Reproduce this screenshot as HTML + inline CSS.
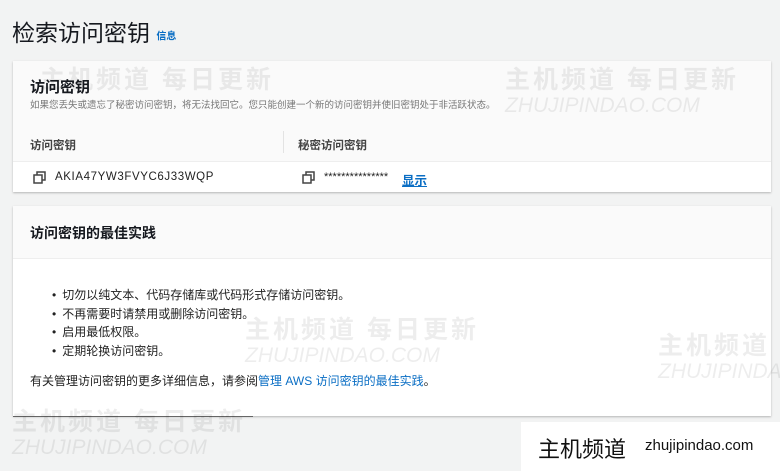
<!DOCTYPE html>
<html><head><meta charset="utf-8"><style>
*{margin:0;padding:0;box-sizing:border-box}
body{width:780px;height:471px;background:#f2f3f3;font-family:"Liberation Sans","Noto Sans CJK SC",sans-serif;color:#16191f;position:relative;overflow:hidden}
.abs{position:absolute}
.card{position:absolute;left:13px;width:758px;background:#fff;box-shadow:0 1px 2px rgba(0,0,0,.25)}
.wm{position:absolute;color:rgba(0,0,0,.07);font-weight:bold;font-size:25px;letter-spacing:3px;white-space:nowrap}
.wm2{position:absolute;color:rgba(0,0,0,.07);font-style:italic;font-size:21px;white-space:nowrap}
ul{list-style:none}
li{font-size:12px;color:#222;height:18.5px}
li:before{content:"•";margin-right:6px}
a{color:#0a6ec4}
</style></head><body>
<div class="abs" style="left:12px;top:14px;font-size:23px;color:#16191f">检索访问密钥 <span style="font-size:10px;color:#0a6ec4;font-weight:bold;vertical-align:middle">信息</span></div>

<div class="card" style="top:61px;height:131px;background:#fafafa">
  <div class="abs" style="left:17px;top:15px;font-size:15px;font-weight:bold">访问密钥</div>
  <div class="abs" style="left:17px;top:36px;font-size:9.5px;color:#777">如果您丢失或遗忘了秘密访问密钥，将无法找回它。您只能创建一个新的访问密钥并使旧密钥处于非活跃状态。</div>
  <div class="abs" style="left:17px;top:76px;font-size:11.5px;font-weight:bold;color:#444">访问密钥</div>
  <div class="abs" style="left:270px;top:70px;width:1px;height:22px;background:#e3e3e3"></div>
  <div class="abs" style="left:285px;top:76px;font-size:11.5px;font-weight:bold;color:#444">秘密访问密钥</div>
  <div class="abs" style="left:0;top:100px;width:758px;height:31px;background:#fff;border-top:1px solid #eee">
    <svg class="abs" style="left:20px;top:9px" width="13" height="13" viewBox="0 0 13 13" fill="none" stroke="#444" stroke-width="1.5"><rect x="1" y="4" width="8" height="8"/><path d="M4 4V1h8v8H9"/></svg>
    <span class="abs" style="left:42px;top:9px;font-size:11.5px;color:#222;letter-spacing:.6px">AKIA47YW3FVYC6J33WQP</span>
    <svg class="abs" style="left:289px;top:9px" width="13" height="13" viewBox="0 0 13 13" fill="none" stroke="#444" stroke-width="1.5"><rect x="1" y="4" width="8" height="8"/><path d="M4 4V1h8v8H9"/></svg>
    <span class="abs" style="left:311px;top:9px;font-size:11px;color:#222">***************</span>
    <span class="abs" style="left:389px;top:8px;font-size:12.5px;color:#0a6ec4;text-decoration:underline;font-weight:bold">显示</span>
  </div>
</div>

<div class="card" style="top:206px;height:210px">
  <div class="abs" style="left:0;top:0;width:758px;height:53px;background:#fafafa;border-bottom:1px solid #eee"></div>
  <div class="abs" style="left:17px;top:17px;font-size:14px;font-weight:bold">访问密钥的最佳实践</div>
  <ul class="abs" style="left:39px;top:80px">
    <li>切勿以纯文本、代码存储库或代码形式存储访问密钥。</li>
    <li>不再需要时请禁用或删除访问密钥。</li>
    <li>启用最低权限。</li>
    <li>定期轮换访问密钥。</li>
  </ul>
  <div class="abs" style="left:17px;top:166px;font-size:12px;color:#222">有关管理访问密钥的更多详细信息，请参阅<a>管理 AWS 访问密钥的最佳实践</a>。</div>
</div>
<div class="abs" style="left:13px;top:416px;width:240px;height:1px;background:#666"></div>

<div class="wm" style="left:505px;top:60px">主机频道 每日更新</div>
<div class="wm2" style="left:505px;top:94px">ZHUJIPINDAO.COM</div>
<div class="wm" style="left:245px;top:310px">主机频道 每日更新</div>
<div class="wm2" style="left:245px;top:344px">ZHUJIPINDAO.COM</div>
<div class="wm" style="left:658px;top:326px">主机频道 每日更新</div>
<div class="wm2" style="left:658px;top:360px">ZHUJIPINDAO.COM</div>
<div class="wm" style="left:12px;top:402px">主机频道 每日更新</div>
<div class="wm2" style="left:12px;top:436px">ZHUJIPINDAO.COM</div>
<div class="wm" style="left:40px;top:60px">主机频道 每日更新</div>

<div class="abs" style="left:521px;top:422px;width:259px;height:49px;background:#fff">
  <span class="abs" style="left:17px;top:10px;font-size:22px;color:#111">主机频道</span>
  <span class="abs" style="left:124px;top:15px;font-size:15px;color:#111">zhujipindao.com</span>
</div>
</body></html>
